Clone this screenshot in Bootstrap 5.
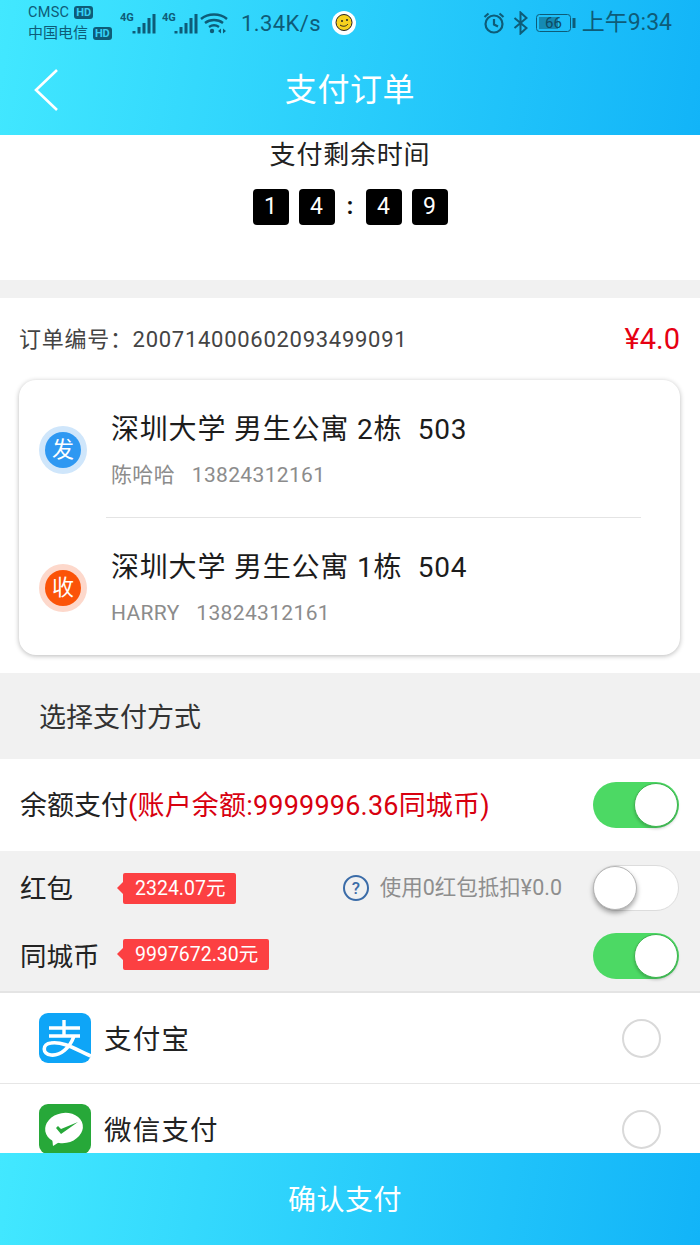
<!DOCTYPE html>
<html lang="zh-CN">
  <head>
    <meta charset="UTF-8" />
    <meta name="viewport" content="width=device-width, initial-scale=1.0" />
    <title>支付订单</title>
    <link href="https://cdn.jsdelivr.net/npm/bootstrap@5.3.3/dist/css/bootstrap.min.css" rel="stylesheet" />
    <style>
      html, body { height: 1245px; overflow: hidden; }
      body { font-family: Roboto, "Noto Sans CJK SC", sans-serif; color: #222; background: #fff; }
      .screen { height: 1245px; }
      .grad { background: linear-gradient(100deg, #42e8ff 0%, #12b4f8 100%); }
      .top-head { height: 135px; flex-shrink: 0; }
      .status { height: 45px; padding: 1px 28px 0 28px; color: #0e5c78; }
      .carrier { width: 92px; font-size: 14.5px; line-height: 21px; letter-spacing: .3px; }
      .hd { background: #0e5c78; color: #35d0f5; font-size: 11px; font-weight: 700; line-height: 13px; padding: 0 2px; border-radius: 3px; margin-left: 5px; letter-spacing: -.2px; }
      .carrier-cn { font-size: 15px; letter-spacing: 0; }
      .speed { font-size: 22px; margin-left: 13px; letter-spacing: .4px; }
      .emoji-face { margin-left: 11px; }
      .clock { font-size: 23px; margin-left: 6px; }
      .title-bar { height: 90px; padding: 0 34px; display: grid; grid-template-columns: 1fr auto 1fr; }
      .title-text { font-size: 32px; color: #fff; letter-spacing: .6px; line-height: 90px; }
      .main-scroll { min-height: 0; overflow: hidden; }
      .timer-wrap { height: 145px; padding-top: 2px; }
      .timer-title { font-size: 26px; line-height: 36px; letter-spacing: .8px; margin-bottom: 16px; }
      .timer-row { gap: 10px; }
      .digit { width: 36px; height: 36px; background: #000; color: #fff; font-size: 23px; border-radius: 4px; }
      .colon { width: 11px; text-align: center; font-size: 23px; color: #111; font-weight: 700; }
      .gap-band { height: 18px; background: #f1f1f1; }
      .order-line { height: 82px; padding: 1px 20px 0 20px; font-size: 22px; color: #444; letter-spacing: .72px; }
      .order-text { margin-left: -1px; }
      .price { color: #e60012; font-size: 29px; letter-spacing: 0; }
      .addr-card { margin: 0 20px 18px 19px; height: 275px; border-radius: 17px; background: #fff; box-shadow: 0 1px 5px rgba(0,0,0,.28); padding: 0 39px 0 20px; }
      .addr-row { height: 137px; padding-top: 2px; }
      .addr-line { border-top: 1px solid #e4e4e4; margin-left: 67px; height: 0; }
      .pin { width: 36px; height: 36px; border-radius: 50%; font-size: 22px; color: #fff; flex-shrink: 0; margin-left: 6px; margin-right: 31px; }
      .pin-blue { background: #2e98f2; box-shadow: 0 0 0 6px #cfe6fb; }
      .pin-red { background: #fb5308; box-shadow: 0 0 0 6px #fdd8cb; }
      .addr-main { font-size: 28px; line-height: 36px; color: #1c1c1c; letter-spacing: .8px; margin-left: -1px; padding-top: 1px; }
      .addr-sub { font-size: 21px; line-height: 28px; color: #8c8c8c; margin-top: 13px; letter-spacing: .35px; margin-left: -1px; }
      .pick-title { height: 86px; background: #f1f1f1; padding-left: 39px; font-size: 27px; padding-top: 5px; color: #333; }
      .bal-row { height: 92px; padding: 0 21px 0 20px; font-size: 27px; color: #222; }
      .bal-text { padding-top: 3px; }
      .bal-note { color: #d8000f; letter-spacing: .2px; }
      .sw { width: 86px; height: 46px; border-radius: 23px; flex-shrink: 0; }
      .sw-on { background: #4cd964; }
      .sw-off { background: #fff; border: 1px solid #dcdcdc; }
      .knob { width: 44px; height: 44px; background: #fff; border-radius: 50%; }
      .sw-on .knob { border: 1px solid #3cb54e; box-shadow: 0 2px 3px rgba(0,0,0,.2); margin-right: 1px; }
      .sw-off .knob { border: 1px solid #b5b5b5; box-shadow: 0 3px 5px rgba(0,0,0,.35); margin-left: -1px; }
      .coupon-box { background: #f1f1f1; height: 142px; padding: 14px 21px 0 20px; border-bottom: 2px solid #e4e4e4; }
      .coupon-row { height: 46px; }
      .coupon-row + .coupon-row { margin-top: 22px; }
      .coupon-name { font-size: 26.5px; color: #222; width: 103px; flex-shrink: 0; padding-top: 1px; }
      .tag { position: relative; background: #fc4042; color: #fff; font-size: 19.5px; line-height: 31px; height: 31px; padding: 0 11px 0 12px; border-radius: 2px; }
      .tag::before { content: ""; position: absolute; left: -6px; top: 9px; border-style: solid; border-width: 6px 6px 6px 0; border-color: transparent #fc4042 transparent transparent; }
      .tag-up { margin-top: -3px; }
      .tip { font-size: 21.5px; color: #8e8e8e; margin-right: 31px; margin-left: 10px; }
      .pay-row { height: 91px; padding: 0 39px 0 39px; border-bottom: 1px solid #e6e6e6; }
      .pay-name { font-size: 27.5px; margin-left: 13px; color: #222; letter-spacing: 1.2px; padding-top: 3px; }
      .radio-ring { width: 39px; height: 39px; border-radius: 50%; border: 2px solid #d9d9d9; background: #fff; }
      .foot-btn { height: 92px; flex-shrink: 0; color: #fff; font-size: 28px; letter-spacing: .5px; padding: 3px 10px 0 0; }
    </style>
  </head>
  <body>
    <div class="screen d-flex flex-column">
      <div class="top-head grad">
        <div class="status d-flex align-items-center">
          <div class="carrier">
            <div class="d-flex align-items-center">CMSC<span class="hd">HD</span></div>
            <div class="d-flex align-items-center carrier-cn">中国电信<span class="hd">HD</span></div>
          </div>
          <svg width="38" height="24" viewBox="0 0 38 24">
            <text x="0" y="10" font-family="Roboto" font-size="11" font-weight="700" fill="#0e5c78">4G</text>
            <path d="M14 20v2.500M19 16v6.500M24 12v10.500M29 7v15.500M34 3v19.500" stroke="#0e5c78" stroke-width="3" />
          </svg>
          <svg class="ms-1" width="38" height="24" viewBox="0 0 38 24">
            <text x="0" y="10" font-family="Roboto" font-size="11" font-weight="700" fill="#0e5c78">4G</text>
            <path d="M14 20v2.500M19 16v6.500M24 12v10.500M29 7v15.500M34 3v19.500" stroke="#0e5c78" stroke-width="3" />
          </svg>
          <svg width="28" height="22" viewBox="0 0 28 22" fill="none" stroke="#0e5c78" stroke-width="2.400">
            <path d="M1 7c7-6 19-6 26 0M5 11c5-4 13-4 18 0M9 15c3-2 7-2 10 0" />
            <circle cx="12" cy="19" r="2.200" fill="#0e5c78" stroke="none" />
            <path d="M21 16.500v5l-3-2.500zM23 16.500v5l3-2.500z" fill="#0e5c78" stroke="none" />
          </svg>
          <span class="speed">1.34K/s</span>
          <svg class="emoji-face" width="24" height="24" viewBox="0 0 24 24">
            <circle cx="12" cy="12" r="12" fill="#fff" />
            <circle cx="12" cy="11.500" r="8" fill="#f6d21f" stroke="#222" stroke-width="1" />
            <circle cx="10" cy="10" r="1" fill="#222" />
            <circle cx="15" cy="9" r="1" fill="#222" />
            <path d="M8 14c3 2 6 1.500 8-1" fill="none" stroke="#222" stroke-width="1" />
          </svg>
          <div class="ms-auto d-flex align-items-center">
            <svg width="22" height="24" viewBox="0 0 22 24" fill="none" stroke="#0e5c78" stroke-width="2.200">
              <circle cx="11" cy="13" r="8.500" />
              <path d="M11 8v5.500l4 2M1.500 6l4-3.500M20.500 6l-4-3.500" />
            </svg>
            <svg class="ms-2" width="15" height="24" viewBox="0 0 15 24" fill="none" stroke="#0e5c78" stroke-width="2">
              <path d="M1.500 7l12 10-6 5.500V1.500l6 5.500L1.500 17" />
            </svg>
            <svg class="ms-2" width="40" height="20" viewBox="0 0 40 20">
              <rect x=".5" y="1.500" width="34" height="17" rx="3" fill="none" stroke="#0e5c78" />
              <rect x="3" y="4" width="19" height="12" fill="#0e5c78" opacity=".55" />
              <rect x="36.500" y="5" width="3" height="10" fill="#0e5c78" />
              <text x="9" y="15" font-family="Roboto" font-size="15" fill="#0e4b63">66</text>
            </svg>
            <span class="clock">上午9:34</span>
          </div>
        </div>
        <div class="title-bar align-items-center">
          <svg width="24" height="42" viewBox="0 0 24 42" fill="none" stroke="#fff" stroke-width="2.600">
            <path d="M23 1L2 21l21 20" />
          </svg>
          <span class="title-text">支付订单</span>
        </div>
      </div>

      <div class="main-scroll flex-grow-1">
        <div class="timer-wrap text-center">
          <div class="timer-title">支付剩余时间</div>
          <div class="d-flex justify-content-center align-items-center timer-row">
            <span class="digit d-flex align-items-center justify-content-center">1</span>
            <span class="digit d-flex align-items-center justify-content-center">4</span>
            <span class="colon">:</span>
            <span class="digit d-flex align-items-center justify-content-center">4</span>
            <span class="digit d-flex align-items-center justify-content-center">9</span>
          </div>
        </div>
        <div class="gap-band"></div>

        <div class="order-line d-flex align-items-center justify-content-between">
          <span class="order-text">订单编号：200714000602093499091</span>
          <span class="price">¥4.0</span>
        </div>

        <div class="addr-card">
          <div class="addr-row d-flex align-items-center">
            <span class="pin pin-blue d-flex align-items-center justify-content-center">发</span>
            <div>
              <div class="addr-main">深圳大学 男生公寓 2栋&nbsp; 503</div>
              <div class="addr-sub">陈哈哈&nbsp;&nbsp; 13824312161</div>
            </div>
          </div>
          <div class="addr-line"></div>
          <div class="addr-row d-flex align-items-center">
            <span class="pin pin-red d-flex align-items-center justify-content-center">收</span>
            <div>
              <div class="addr-main">深圳大学 男生公寓 1栋&nbsp; 504</div>
              <div class="addr-sub">HARRY&nbsp;&nbsp; 13824312161</div>
            </div>
          </div>
        </div>

        <div class="pick-title d-flex align-items-center">选择支付方式</div>

        <div class="bal-row d-flex align-items-center justify-content-between">
          <span class="bal-text">余额支付<span class="bal-note">(账户余额:9999996.36同城币)</span></span>
          <div class="sw sw-on d-flex align-items-center justify-content-end"><div class="knob"></div></div>
        </div>

        <div class="coupon-box">
          <div class="coupon-row d-flex align-items-center">
            <span class="coupon-name">红包</span>
            <span class="tag">2324.07元</span>
            <svg class="ms-auto" width="28" height="28" viewBox="0 0 28 28">
              <circle cx="14" cy="14" r="12" fill="none" stroke="#3b6ca8" stroke-width="2" />
              <text x="14" y="20" text-anchor="middle" font-family="Roboto" font-size="17" font-weight="500" fill="#3b6ca8">?</text>
            </svg>
            <span class="tip">使用0红包抵扣¥0.0</span>
            <div class="sw sw-off d-flex align-items-center"><div class="knob"></div></div>
          </div>
          <div class="coupon-row d-flex align-items-center">
            <span class="coupon-name">同城币</span>
            <span class="tag tag-up">9997672.30元</span>
            <div class="sw sw-on d-flex align-items-center justify-content-end ms-auto"><div class="knob"></div></div>
          </div>
        </div>

        <div class="pay-row d-flex align-items-center justify-content-between">
          <div class="d-flex align-items-center">
            <svg width="52" height="50" viewBox="0 0 52 50">
              <rect width="52" height="50" rx="9" fill="#0ea5f7" />
              <path d="M10 15h31M25 7v15M10 23h31" fill="none" stroke="#fff" stroke-width="3.400" />
              <path d="M35 23C31 35 21 43 12 42 3 41 3 31 12 30c12-2 26 7 40 13" fill="none" stroke="#fff" stroke-width="3.600" />
            </svg>
            <span class="pay-name">支付宝</span>
          </div>
          <div class="radio-ring"></div>
        </div>
        <div class="pay-row d-flex align-items-center justify-content-between">
          <div class="d-flex align-items-center">
            <svg width="52" height="50" viewBox="0 0 52 50">
              <rect width="52" height="50" rx="9" fill="#27a839" />
              <ellipse cx="25" cy="24" rx="19" ry="15" fill="#fff" transform="rotate(-10 25 24)" />
              <path d="M13 33l1 9 8-5z" fill="#fff" />
              <path d="M17 24l5 6 17-12-17 7-3-3z" fill="#27a839" />
            </svg>
            <span class="pay-name">微信支付</span>
          </div>
          <div class="radio-ring"></div>
        </div>
      </div>

      <div class="foot-btn grad d-flex align-items-center justify-content-center">确认支付</div>
    </div>

    <script src="https://cdn.jsdelivr.net/npm/bootstrap@5.3.3/dist/js/bootstrap.bundle.min.js"></script>
  </body>
</html>
